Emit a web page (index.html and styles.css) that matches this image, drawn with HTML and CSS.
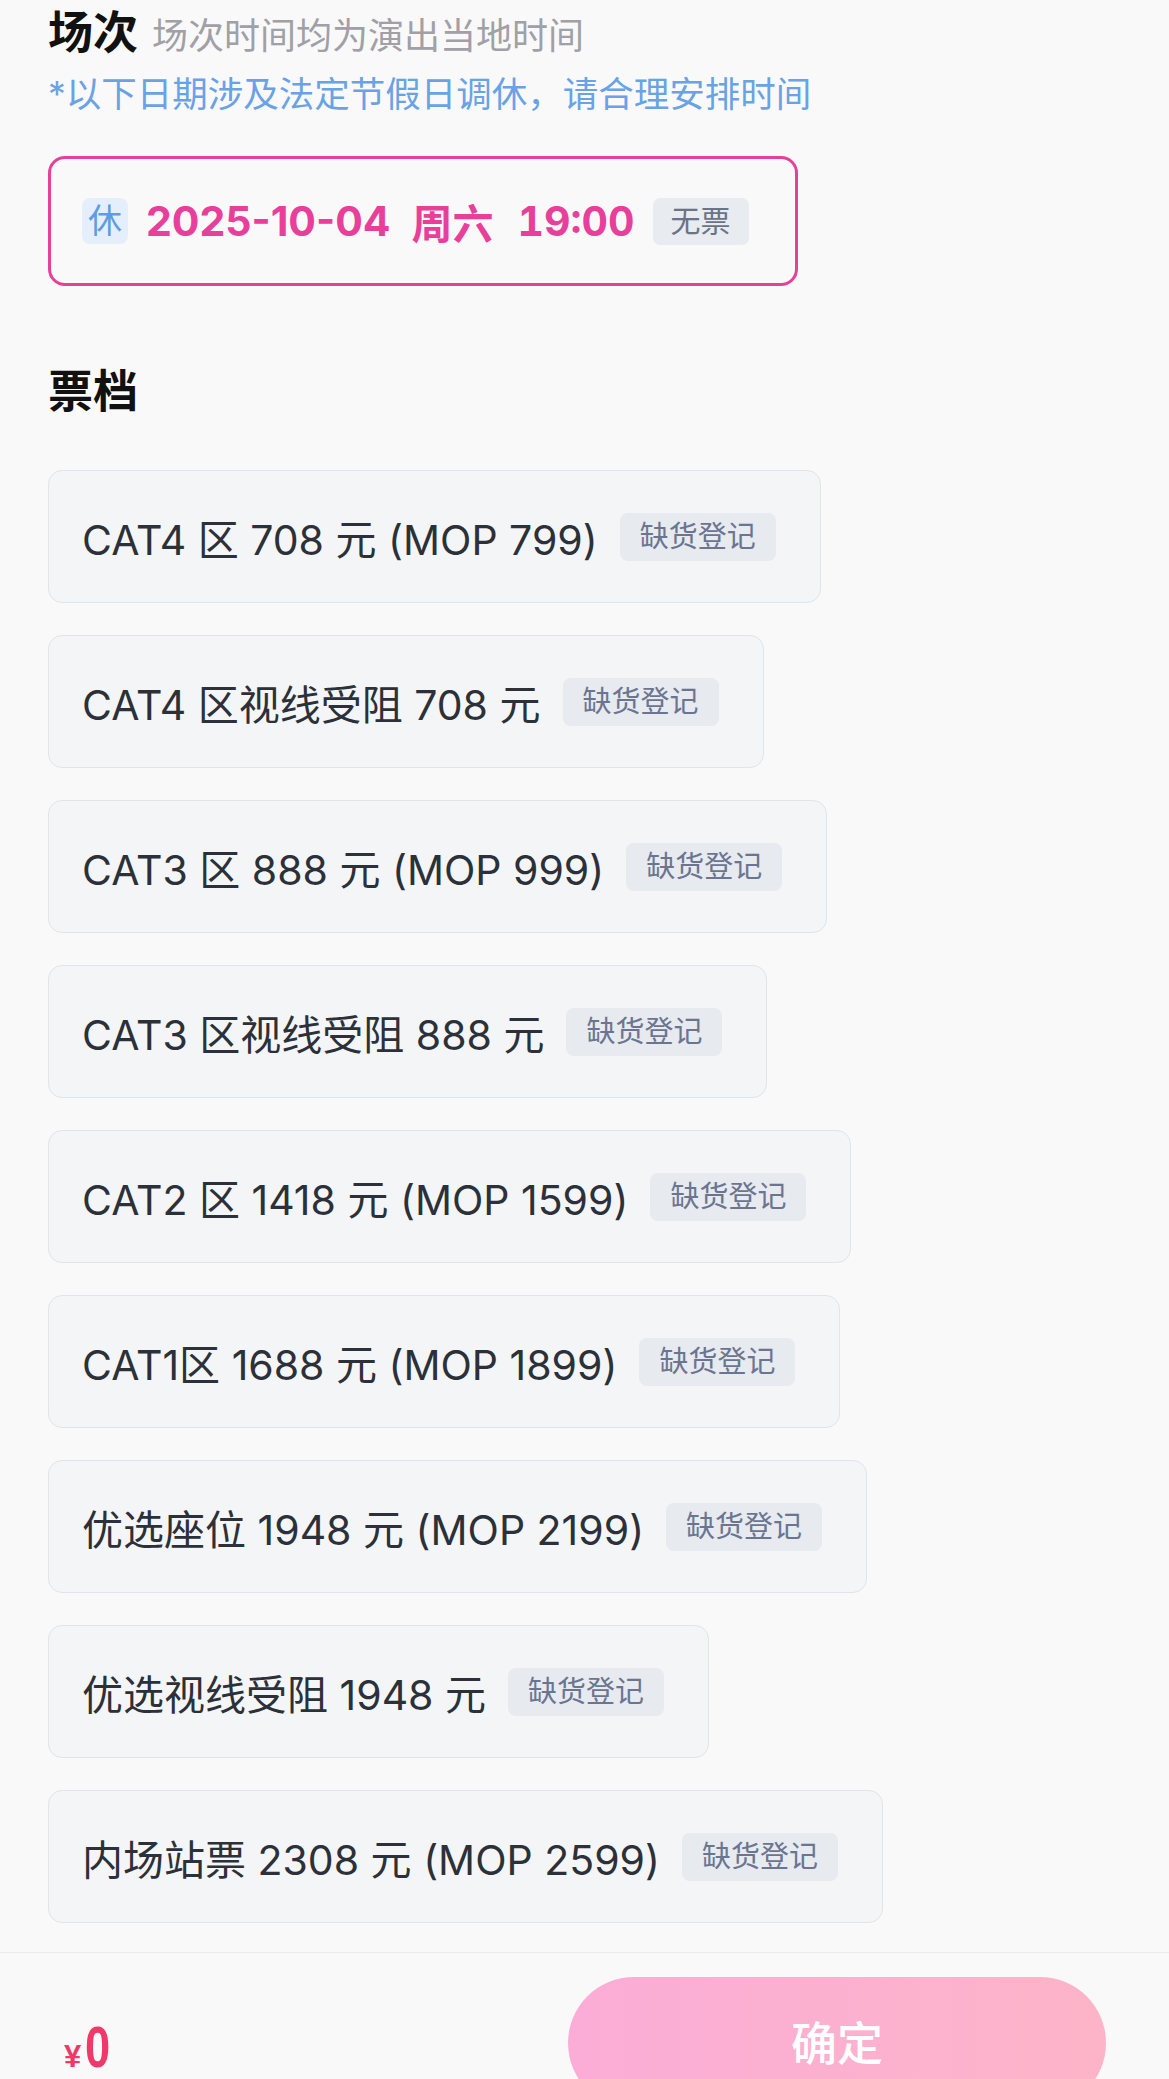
FILE: index.html
```html
<!DOCTYPE html>
<html lang="zh-CN">
<head>
  <meta charset="UTF-8">
  <meta name="viewport" content="width=device-width, initial-scale=1.0">
  <title>选择场次票档</title>
  <link rel="stylesheet" href="styles.css">
</head>
<body>
  <div id="content">
    <!-- 场次 -->
    <div class="section-head">
      <h2 class="section-title">场次</h2>
      <span class="section-sub">场次时间均为演出当地时间</span>
    </div>
    <p class="holiday-note">*以下日期涉及法定节假日调休，请合理安排时间</p>

    <div class="session active">
      <span class="rest-badge">休</span>
      <span class="session-date">2025-10-04</span>
      <span class="session-week">周六</span>
      <span class="session-time">19:00</span>
      <span class="session-tag">无票</span>
    </div>

    <!-- 票档 -->
    <h2 class="section-title tier-title">票档</h2>
    <div class="tier-list">
      <div class="tier"><span class="tier-name">CAT4 区 708 元 (MOP 799)</span><span class="tier-tag">缺货登记</span></div>
      <div class="tier"><span class="tier-name">CAT4 区视线受阻 708 元</span><span class="tier-tag">缺货登记</span></div>
      <div class="tier"><span class="tier-name">CAT3 区 888 元 (MOP 999)</span><span class="tier-tag">缺货登记</span></div>
      <div class="tier"><span class="tier-name">CAT3 区视线受阻 888 元</span><span class="tier-tag">缺货登记</span></div>
      <div class="tier"><span class="tier-name">CAT2 区 1418 元 (MOP 1599)</span><span class="tier-tag">缺货登记</span></div>
      <div class="tier"><span class="tier-name">CAT1区 1688 元 (MOP 1899)</span><span class="tier-tag">缺货登记</span></div>
      <div class="tier"><span class="tier-name">优选座位 1948 元 (MOP 2199)</span><span class="tier-tag">缺货登记</span></div>
      <div class="tier"><span class="tier-name">优选视线受阻 1948 元</span><span class="tier-tag">缺货登记</span></div>
      <div class="tier"><span class="tier-name">内场站票 2308 元 (MOP 2599)</span><span class="tier-tag">缺货登记</span></div>
    </div>
  </div>

  <footer>
    <div class="price"><span class="price-sign">¥</span><span class="price-num">0</span></div>
    <div id="confirm-btn">确定</div>
  </footer>
</body>
</html>
```

FILE: styles.css
```css
body {
  margin: 0;
  padding: 0;
  background-color: #f9f9fa;
  font-family: Inter, "Noto Sans CJK SC", sans-serif;
  color: #2c3038;
  overflow: hidden;
}

#content {
  padding: 0 48px;
}

.section-head {
  display: flex;
  align-items: baseline;
  gap: 14px;
  height: 66px;
  line-height: 66px;
}

.section-title {
  margin: 0;
  font-size: 45px;
  font-weight: 700;
  color: #111;
  line-height: 66px;
}

.section-sub {
  font-size: 36px;
  color: #a0a0a6;
}

.holiday-note {
  margin: 4px 0 0;
  font-size: 35.5px;
  line-height: 50px;
  color: #6aa2e6;
}

.session {
  display: inline-flex;
  align-items: center;
  height: 124px;
  margin-top: 36px;
  padding: 0 46px 0 31px;
  border: 3px solid #e8409a;
  border-radius: 17px;
}

.rest-badge {
  width: 46px;
  height: 46px;
  line-height: 46px;
  text-align: center;
  border-radius: 8px;
  background-color: #e5effb;
  color: #5e9de4;
  font-size: 34px;
}

.session-date,
.session-week,
.session-time {
  font-size: 41px;
  font-weight: 700;
  color: #e8409a;
}

.session-date {
  margin-left: 18px;
}

.session-week {
  margin-left: 21px;
}

.session-time {
  margin-left: 24px;
  font-feature-settings: "tnum";
}

.session-tag {
  margin-left: 18px;
  padding: 0 18px;
  height: 47px;
  line-height: 47px;
  border-radius: 7px;
  background-color: #e8ebef;
  color: #6b7386;
  font-size: 30px;
}

.tier-title {
  margin-top: 73px;
}

.tier-list {
  display: flex;
  flex-direction: column;
  align-items: flex-start;
  gap: 32px;
  margin-top: 45px;
}

.tier {
  display: flex;
  align-items: center;
  height: 131px;
  padding: 0 44px 0 33px;
  background-color: #f3f5f7;
  border: 1px solid #e1e4e8;
  border-radius: 14px;
}

.tier-name {
  font-size: 41px;
  color: #2c3038;
}

.tier-tag {
  margin-left: 22px;
  padding: 0 20px;
  height: 48px;
  line-height: 48px;
  border-radius: 8px;
  background-color: #e7eaee;
  color: #6b7591;
  font-size: 29px;
}

footer {
  display: flex;
  justify-content: space-between;
  align-items: flex-start;
  margin-top: 29px;
  padding: 24px 63px 0 64px;
  border-top: 1px solid #ebebeb;
}

.price {
  display: flex;
  align-items: baseline;
  height: 58px;
  line-height: 58px;
  margin-top: 41px;
  color: #f0396b;
  font-family: "Liberation Sans", sans-serif;
  font-weight: 700;
}

.price-sign {
  font-size: 31px;
}

.price-num {
  display: inline-block;
  margin-left: 4px;
  font-size: 58px;
  transform: scaleX(0.78);
  transform-origin: left center;
}

#confirm-btn {
  width: 538px;
  height: 132px;
  line-height: 132px;
  border-radius: 66px;
  background: linear-gradient(90deg, #fbadd7, #fdb4c8);
  color: #fff;
  text-align: center;
  font-size: 46px;
  font-weight: 500;
}
```
